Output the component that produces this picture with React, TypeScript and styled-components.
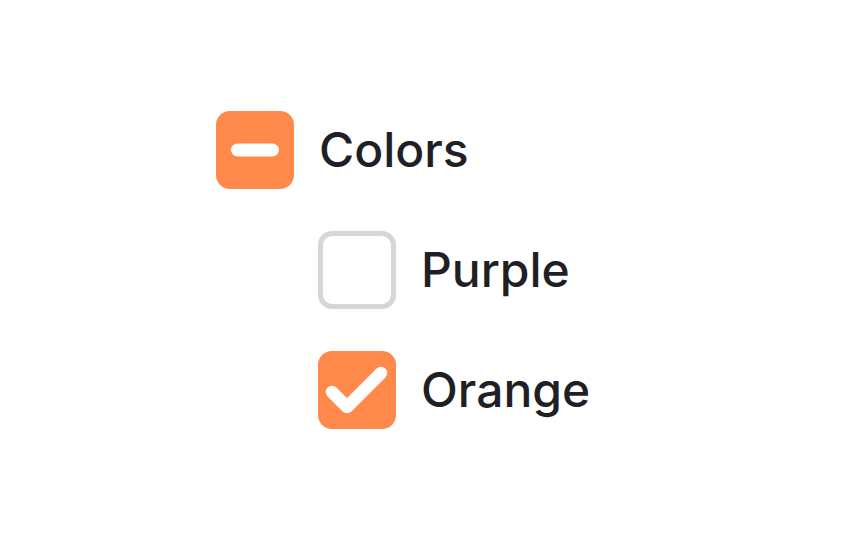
import React from "react";
import styled, { createGlobalStyle } from "styled-components";

const Global = createGlobalStyle`
  html, body { margin: 0; padding: 0; background: #ffffff; }
  #root { height: 540px; }
`;

const Page = styled.div`
  height: 540px;
  display: flex;
  flex-direction: column;
  justify-content: center;
  padding-left: 216px;
  box-sizing: border-box;
  font-family: Inter, "Noto Sans", sans-serif;
`;

const Group = styled.div`
  display: flex;
  flex-direction: column;
  gap: 42px;
`;

const Row = styled.label<{ $indent?: boolean }>`
  display: flex;
  align-items: center;
  gap: 25px;
  margin-left: ${(p) => (p.$indent ? "102px" : "0")};
  height: 78px;
`;

const Box = styled.span<{ $checked: boolean }>`
  width: 78px;
  height: 78px;
  box-sizing: border-box;
  border-radius: 14px;
  display: flex;
  align-items: center;
  justify-content: center;
  flex-shrink: 0;
  background: ${(p) => (p.$checked ? "#ff884b" : "#ffffff")};
  border: ${(p) => (p.$checked ? "none" : "5px solid #d6d6d9")};
`;

const Label = styled.span`
  font-size: 48px;
  font-weight: 450;
  color: #1f1f25;
  line-height: 1;
  letter-spacing: 0;
`;

const Minus = () => (
  <svg width="78" height="78" viewBox="0 0 78 78">
    <line x1="21.5" y1="39" x2="56.5" y2="39" stroke="#fff" strokeWidth="13" strokeLinecap="round" />
  </svg>
);

const Check = () => (
  <svg width="78" height="78" viewBox="0 0 78 78">
    <polyline
      points="14,41 29,56 63,22"
      fill="none"
      stroke="#fff"
      strokeWidth="12.5"
      strokeLinecap="round"
      strokeLinejoin="round"
    />
  </svg>
);

export default function App() {
  return (
    <>
      <Global />
      <Page>
        <Group>
          <Row>
            <Box $checked>
              <Minus />
            </Box>
            <Label>Colors</Label>
          </Row>
          <Row $indent>
            <Box $checked={false} />
            <Label>Purple</Label>
          </Row>
          <Row $indent>
            <Box $checked>
              <Check />
            </Box>
            <Label>Orange</Label>
          </Row>
        </Group>
      </Page>
    </>
  );
}
